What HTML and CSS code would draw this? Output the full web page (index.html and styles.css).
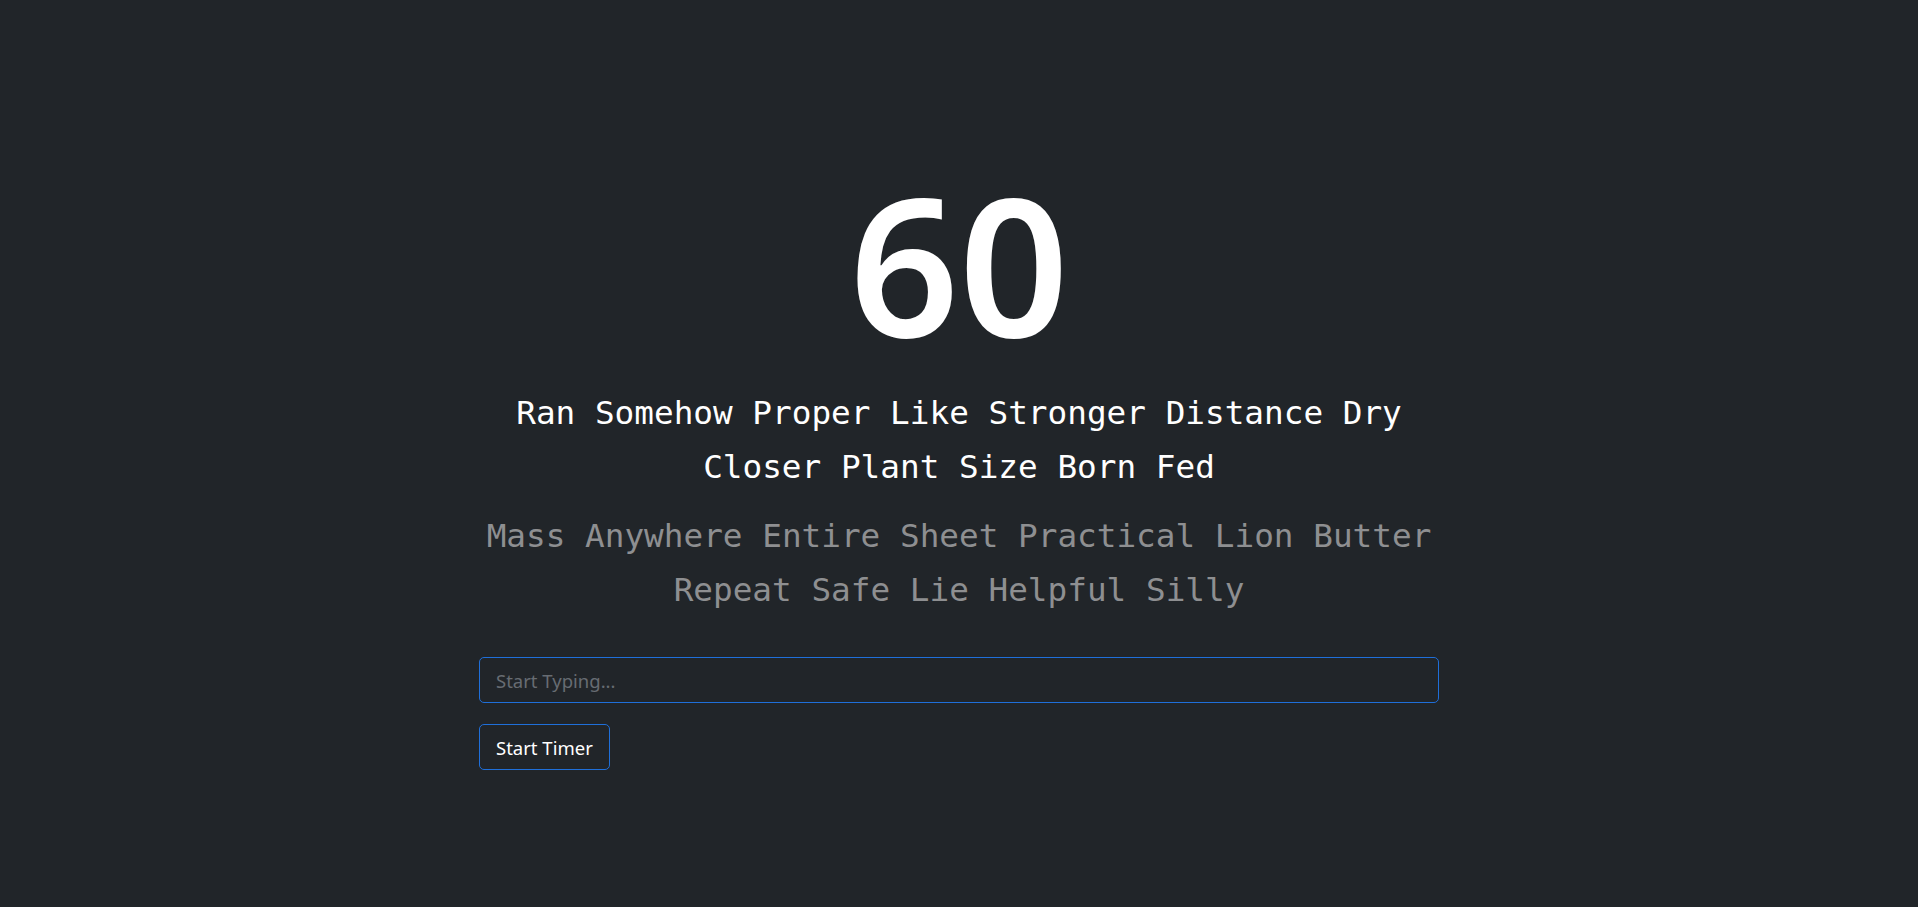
FILE: index.html
```html
<!DOCTYPE html>
<html lang="en">
<head>
<meta charset="utf-8">
<title>Typing Test</title>
<link rel="stylesheet" href="styles.css">
</head>
<body>
<main class="container">
  <h1 class="timer">60</h1>
  <p class="words current">Ran Somehow Proper Like Stronger Distance Dry Closer Plant Size Born Fed</p>
  <p class="words upcoming">Mass Anywhere Entire Sheet Practical Lion Butter Repeat Safe Lie Helpful Silly</p>
  <input class="typing-input" type="text" placeholder="Start Typing...">
  <div class="actions">
    <button class="btn-start" type="button">Start Timer</button>
  </div>
</main>
</body>
</html>
```

FILE: styles.css
```css
html, body {
  margin: 0;
  padding: 0;
  background: #212529;
  height: 100%;
}

body {
  font-family: "Noto Sans", "Open Sans", sans-serif;
  color: #ffffff;
}

.container {
  width: 960px;
  margin: 0 auto;
  padding-top: 160px;
  display: flex;
  flex-direction: column;
}

.timer {
  margin: 0;
  font-family: "Noto Sans", "Open Sans", sans-serif;
  font-weight: 600;
  font-size: 192px;
  line-height: 206px;
  text-align: center;
  color: #ffffff;
}

.words {
  margin: 0;
  font-family: "DejaVu Sans Mono", "Liberation Mono", monospace;
  font-size: 32.7px;
  line-height: 54px;
  text-align: center;
}

.current {
  margin-top: 20px;
  color: #ffffff;
}

.upcoming {
  margin-top: 15px;
  color: #8e8f91;
}

.typing-input {
  box-sizing: border-box;
  margin-top: 40px;
  width: 100%;
  height: 46px;
  padding: 0 16px;
  font-family: "Noto Sans", "Open Sans", sans-serif;
  font-size: 18.5px;
  color: #ffffff;
  background: #212529;
  border: 1px solid #1f6fd9;
  border-radius: 5px;
  outline: none;
}

.typing-input::placeholder {
  color: #676c72;
}

.actions {
  margin-top: 21px;
  display: flex;
}

.btn-start {
  box-sizing: border-box;
  height: 46px;
  padding: 0 16px;
  font-family: "Noto Sans", "Open Sans", sans-serif;
  font-size: 18.5px;
  color: #ffffff;
  background: #212529;
  border: 1px solid #1f6fd9;
  border-radius: 5px;
  cursor: pointer;
}
```
